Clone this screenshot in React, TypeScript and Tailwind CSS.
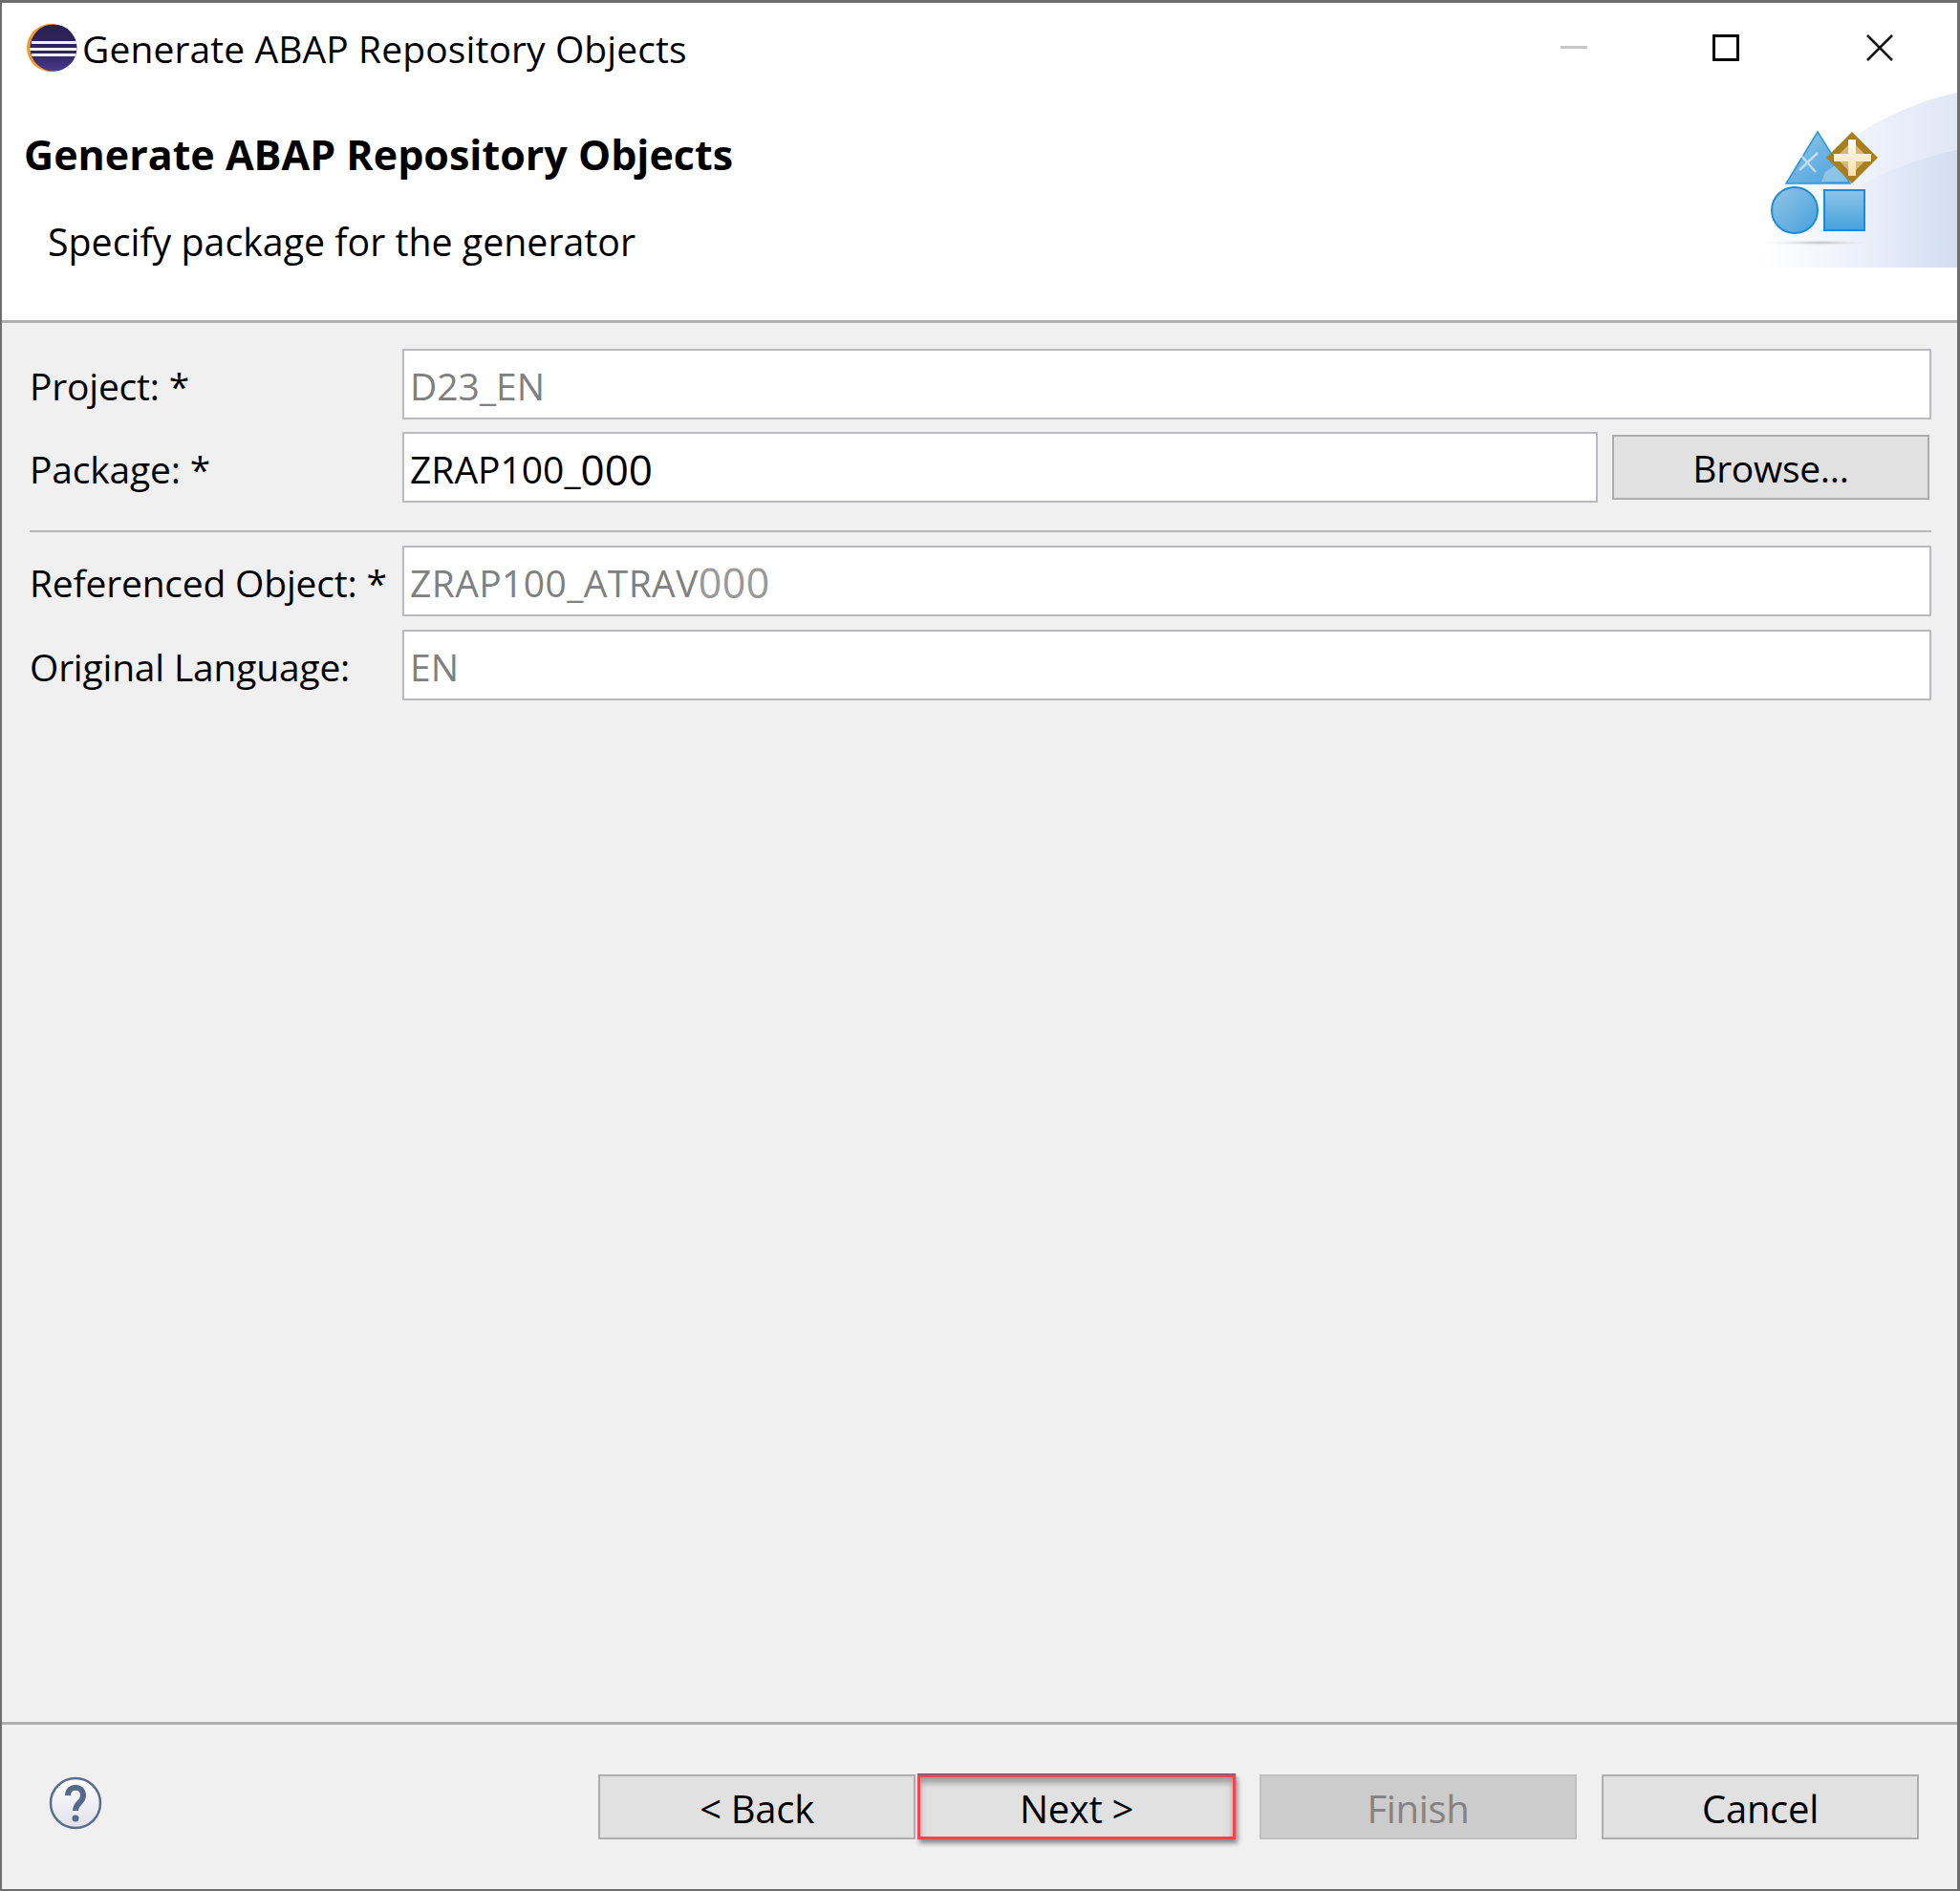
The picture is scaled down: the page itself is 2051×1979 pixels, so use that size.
const font = { fontFamily: '"Open Sans", "Noto Sans", sans-serif' }

function EclipseIcon() {
  return (
    <svg width="56" height="52" viewBox="26 23 56 52" className="shrink-0">
      <defs>
        <linearGradient id="ecl" x1="0" y1="0" x2="0" y2="1">
          <stop offset="0" stopColor="#2a2152" />
          <stop offset="0.6" stopColor="#2f2560" />
          <stop offset="1" stopColor="#4a3a8c" />
        </linearGradient>
      </defs>
      <circle cx="53" cy="49" r="25" fill="#f39a2c" />
      <circle cx="56" cy="49" r="24.5" fill="url(#ecl)" />
      <rect x="33" y="42" width="47" height="3" fill="#f2f0f7" />
      <rect x="31" y="49" width="49" height="3" fill="#f2f0f7" />
      <rect x="33" y="55" width="46" height="3" fill="#f2f0f7" />
    </svg>
  )
}

function WizardArt() {
  return (
    <svg width="206" height="198" viewBox="1842 82 206 198" className="shrink-0">
      <defs>
        <linearGradient id="waveA" x1="0" y1="0" x2="1" y2="0">
          <stop offset="0" stopColor="#ffffff" />
          <stop offset="0.45" stopColor="#f0f4fc" />
          <stop offset="1" stopColor="#e0e7f6" />
        </linearGradient>
        <linearGradient id="waveB" x1="0" y1="0" x2="1" y2="0">
          <stop offset="0" stopColor="#ffffff" />
          <stop offset="0.4" stopColor="#f1f4fc" />
          <stop offset="1" stopColor="#d2ddf2" />
        </linearGradient>
        <linearGradient id="shapeBlue" x1="0" y1="0" x2="1" y2="1">
          <stop offset="0" stopColor="#92c6e8" />
          <stop offset="1" stopColor="#46a0dc" />
        </linearGradient>
        <linearGradient id="squareBlue" x1="0" y1="0" x2="0" y2="1">
          <stop offset="0" stopColor="#8cc4e7" />
          <stop offset="1" stopColor="#46a2de" />
        </linearGradient>
        <radialGradient id="shadow">
          <stop offset="0" stopColor="#b9b9b9" />
          <stop offset="1" stopColor="#f3f5fb" stopOpacity="0" />
        </radialGradient>
        <linearGradient id="plus" x1="0" y1="0" x2="0" y2="1">
          <stop offset="0" stopColor="#fffdf5" />
          <stop offset="1" stopColor="#f6dfae" />
        </linearGradient>
      </defs>
      <path d="M1842 280 C1848 225 1885 185 1930 150 C1965 124 2010 105 2048 97 V280 Z" fill="url(#waveA)" />
      <path d="M1842 280 C1850 250 1880 225 1925 205 C1960 185 2005 165 2048 157 V280 Z" fill="url(#waveB)" />
      <ellipse cx="1905" cy="254" rx="62" ry="3" fill="url(#shadow)" />
      <path d="M1902 138 L1936 192 H1869 Z" fill="url(#shapeBlue)" stroke="#2f95da" strokeWidth="1.5" />
      <path d="M1910 180 L1922 172 L1934 190 H1906 Z" fill="#cfe7f6" opacity="0.45" />
      <path d="M1885 163 L1900 180 M1902 160 L1883 178" stroke="#d8ecf8" strokeWidth="2.5" opacity="0.75" />
      <circle cx="1878" cy="220" r="24" fill="url(#shapeBlue)" stroke="#1f8bd6" strokeWidth="2" />
      <rect x="1909" y="199" width="42" height="42" fill="url(#squareBlue)" stroke="#1b8ad8" strokeWidth="2" />
      <path d="M1938 138 L1965 165 L1938 192 L1911 165 Z" fill="#a67f1f" />
      <path d="M1938 148 L1955 165 L1938 182 L1921 165 Z" fill="#d6b878" />
      <path d="M1934 146 H1942 V161 H1958 V169 H1942 V184 H1934 V169 H1919 V161 H1934 Z" fill="url(#plus)" />
    </svg>
  )
}

function HelpIcon() {
  return (
    <svg width="56" height="56" viewBox="0 0 56 56">
      <defs>
        <linearGradient id="helpBg" x1="0" y1="0" x2="0" y2="1">
          <stop offset="0" stopColor="#ffffff" />
          <stop offset="1" stopColor="#dfe2ea" />
        </linearGradient>
      </defs>
      <circle cx="28" cy="28" r="26" fill="url(#helpBg)" stroke="#5a6c8e" strokeWidth="2.5" />
      <path d="M20 20 C20 9 36 9 36 20 C36 28 28 27 28 36" fill="none" stroke="#56688c" strokeWidth="6" />
      <circle cx="28" cy="44" r="3.5" fill="#56688c" />
    </svg>
  )
}

function Field({ children, muted, className }: { children: React.ReactNode; muted?: boolean; className?: string }) {
  return (
    <div
      className={
        "flex h-[74px] items-center border-2 border-[#b9b9c0] bg-white pt-[4px] pl-[6px] text-[39px] " +
        (muted ? "text-[#7f8080] " : "text-black ") +
        (className ?? "flex-1")
      }
    >
      {children}
    </div>
  )
}

function Label({ text }: { text: string }) {
  return <div className="w-[390px] shrink-0 pt-[4px] text-[39px] tracking-[-0.2px] text-black">{text}</div>
}

function Button({ label, className }: { label: string; className?: string }) {
  return (
    <button className={"h-[68px] w-[332px] border-2 border-[#adadad] bg-[#e1e1e1] pt-[3px] tracking-[-0.3px] text-black " + (className ?? "text-[40px]")}>
      {label}
    </button>
  )
}

export default function App() {
  return (
    <div
      style={font}
      className="flex h-[1979px] w-[2051px] flex-col border-t-[3px] border-r-[3px] border-b-[2px] border-l-[2px] border-[#6e6e6e] bg-[#f0f0f0]"
    >
      {/* Header */}
      <div className="h-[335px] shrink-0 border-b-[3px] border-[#b0b0b0] bg-white">
        <div className="flex h-[79px] items-center pt-[14px] pl-[24px]">
          <EclipseIcon />
          <div className="mt-[4px] ml-[4px] text-[39px] tracking-[0.1px] text-black">Generate ABAP Repository Objects</div>
          <div className="ml-auto flex items-center">
            <div className="h-[3px] w-[28px] bg-[#c8c8c8]" />
            <div className="ml-[131px] h-[28px] w-[28px] border-[3px] border-black" />
            <svg width="28" height="28" viewBox="0 0 28 28" className="mr-[67px] ml-[133px]">
              <path d="M1 1 L27 27 M27 1 L1 27" stroke="#111" strokeWidth="2.5" />
            </svg>
          </div>
        </div>
        <div className="flex items-start justify-between">
          <div className="pl-[23px]">
            <div className="mt-[44px] text-[43px] leading-[72px] font-bold text-black">Generate ABAP Repository Objects</div>
            <div className="mt-[30px] pl-[25px] text-[39.3px] leading-[50px] text-black">Specify package for the generator</div>
          </div>
          <WizardArt />
        </div>
      </div>

      {/* Form */}
      <div className="flex flex-1 flex-col pt-[27px] pr-[27px] pl-[29px]">
        <div className="flex items-center">
          <Label text="Project: *" />
          <Field muted>D23_EN</Field>
        </div>
        <div className="mt-[13px] flex items-center">
          <Label text="Package: *" />
          <Field className="w-[1251px]">
            ZRAP100_<span className="text-[44px]">000</span>
          </Field>
          <Button label="Browse..." className="ml-[15px] text-[39px]" />
        </div>
        <div className="mt-[29px] h-[2px] bg-[#b9b9b9]" />
        <div className="mt-[14px] flex items-center">
          <Label text="Referenced Object: *" />
          <Field muted className="flex-1 tracking-[0.4px]">
            ZRAP100_ATRAV<span className="text-[43px] text-[#999999]">000</span>
          </Field>
        </div>
        <div className="mt-[14px] flex items-center">
          <Label text="Original Language:" />
          <Field muted>EN</Field>
        </div>
      </div>

      {/* Footer */}
      <div className="flex h-[175px] shrink-0 items-start border-t-[3px] border-[#b0b0b0] pt-[52px] pl-[49px]">
        <div className="mt-[2px]">
          <HelpIcon />
        </div>
        <Button label="< Back" className="ml-[519px] text-[40px]" />
        <Button
          label="Next >"
          className="ml-[2px] w-[333px] !border-[3px] !border-[#f4444f] text-[40px] shadow-[0_-1px_0_#0a6fc9,2px_4px_5px_rgba(0,0,0,0.45),inset_0_6px_6px_rgba(0,0,0,0.3)]"
        />
        <button className="ml-[25px] h-[68px] w-[332px] border-2 border-[#bfbfbf] bg-[#cccccc] pt-[3px] text-[40px] tracking-[-0.3px] text-[#838383]">
          Finish
        </button>
        <Button label="Cancel" className="ml-[26px] text-[40px]" />
      </div>
    </div>
  )
}
